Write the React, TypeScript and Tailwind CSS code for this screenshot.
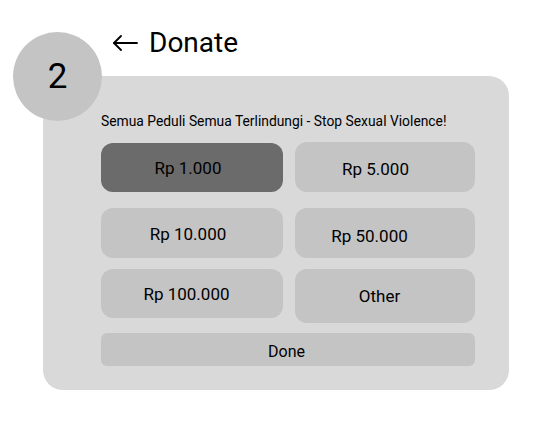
import React from 'react'

const rows = [
  {
    gap: 'mt-[13px]',
    items: [
      { label: 'Rp 1.000', box: 'w-[182px] h-[49px] mt-[1px] bg-[#6b6b6b]', text: 'pr-[8px] pt-[1px]' },
      { label: 'Rp 5.000', box: 'w-[180px] h-[50px] bg-[#c4c4c4]', text: 'pr-[19px] pt-[4px]' },
    ],
  },
  {
    gap: 'mt-[16px]',
    items: [
      { label: 'Rp 10.000', box: 'w-[182px] h-[50px] bg-[#c4c4c4]', text: 'pr-[8px] pt-[2px]' },
      { label: 'Rp 50.000', box: 'w-[180px] h-[50px] bg-[#c4c4c4]', text: 'pr-[31px] pt-[6px]' },
    ],
  },
  {
    gap: 'mt-[11px]',
    items: [
      { label: 'Rp 100.000', box: 'w-[182px] h-[49px] bg-[#c4c4c4]', text: 'pr-[11px] pt-[0px]' },
      { label: 'Other', box: 'w-[180px] h-[54px] bg-[#c4c4c4]', text: 'pr-[11px] pt-[0px]' },
    ],
  },
]

export default function App() {
  return (
    <div
      className="relative w-[552px] h-[433px] bg-white text-black"
      style={{ fontFamily: 'Roboto, "Liberation Sans", sans-serif' }}
    >
      {/* Header */}
      <div className="flex items-center gap-[11px] pl-[112px] pt-[29px]">
        <svg width="26" height="16" viewBox="0 0 26 16" fill="none" stroke="currentColor" strokeWidth="1.8" strokeLinecap="round" strokeLinejoin="round">
          <path d="M25 8H2" />
          <path d="M9 1 2 8l7 7" />
        </svg>
        <span className="text-[28px] leading-[28px]">Donate</span>
      </div>

      {/* Card */}
      <div className="ml-[43px] mt-[19px] w-[466px] h-[314px] rounded-[20px] bg-[#d9d9d9] pl-[58px] pt-[37px]">
        <p className="text-[13.85px] leading-[16px]">Semua Peduli Semua Terlindungi - Stop Sexual Violence!</p>

        {rows.map((row, i) => (
          <div key={i} className={`flex items-start gap-[12px] ${row.gap}`}>
            {row.items.map(item => (
              <button
                key={item.label}
                className={`flex items-center justify-center rounded-[12px] text-[17px] leading-[20px] ${item.box}`}
              >
                <span className={item.text}>{item.label}</span>
              </button>
            ))}
          </div>
        ))}

        <button className="mt-[10px] flex items-center justify-center w-[374px] h-[33px] rounded-[6px] bg-[#c4c4c4] text-[16px] leading-[20px]">
          <span className="pr-[3px] pt-[4px]">Done</span>
        </button>
      </div>

      {/* Step badge */}
      <div className="absolute left-[13px] top-[32px] w-[89px] h-[89px] rounded-full bg-[#c4c4c4] flex items-center justify-center">
        <span className="text-[35px] leading-[35px]">2</span>
      </div>
    </div>
  )
}
